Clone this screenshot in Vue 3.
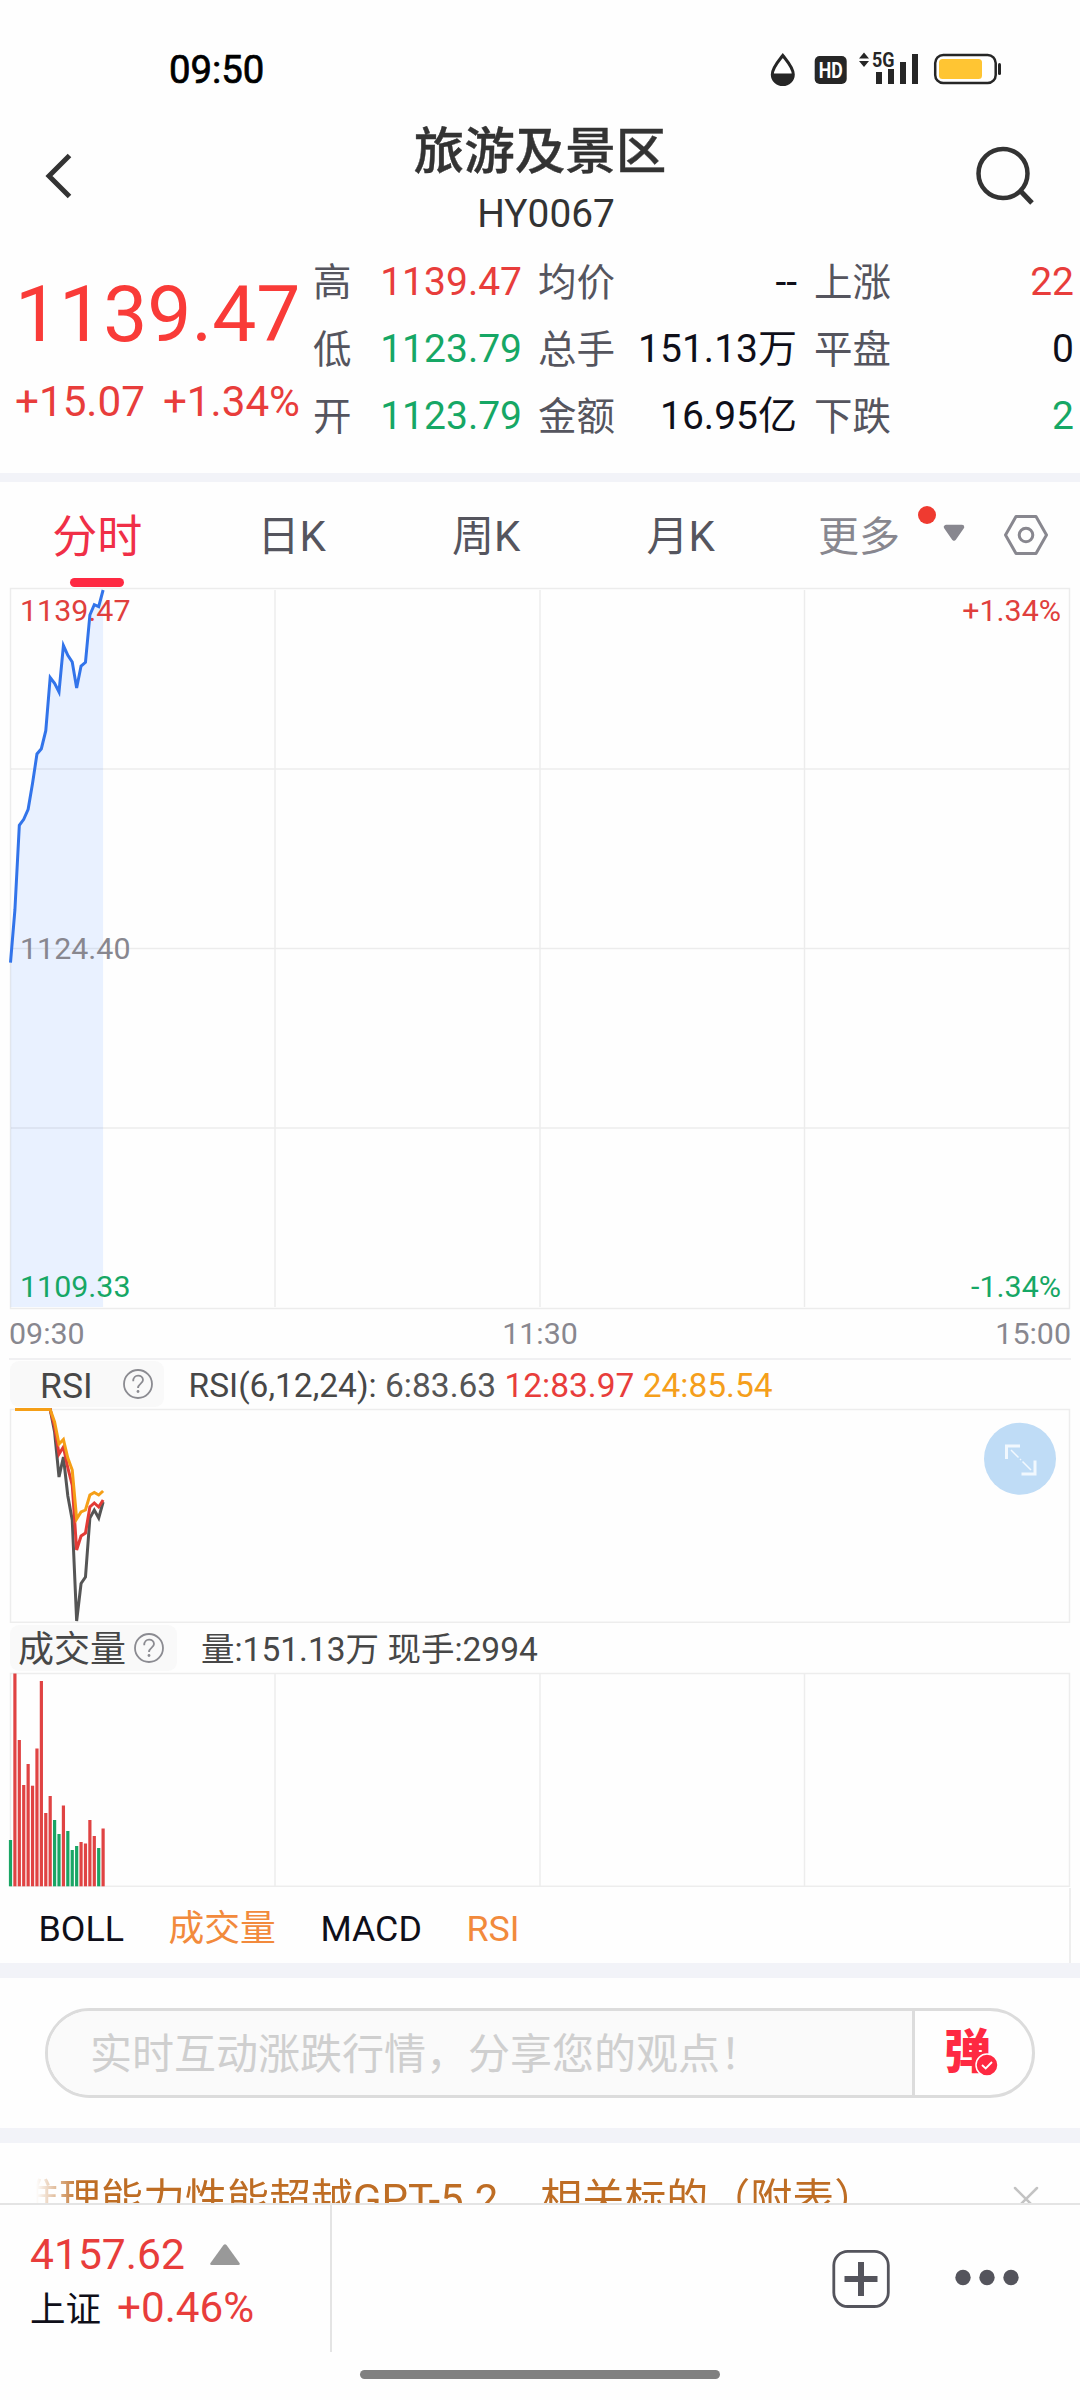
<script setup>
const STEP = 4.41
const LEFT = 10.5
const px = (i) => LEFT + i * STEP

const stats = [
  [['高', '1139.47', 'up'], ['低', '1123.79', 'down'], ['开', '1123.79', 'down']],
  [['均价', '--', ''], ['总手', '151.13万', ''], ['金额', '16.95亿', '']],
  [['上涨', '22', 'up'], ['平盘', '0', ''], ['下跌', '2', 'down']],
]
const tabs = ['分时', '日K', '周K', '月K']

const price = [962.7, 910, 825.3, 819.3, 809.3, 783.3, 754, 748.7, 730.7, 677.5, 683.3, 692, 645.5, 655.3, 662, 688, 666, 662.3, 615, 604.7, 606.7, 590]
const priceLine = price.map((y, i) => `${px(i)},${y}`).join(' ')
const priceArea = `${priceLine} ${px(21)},1307 ${LEFT},1307`

const series = (ys) => `15,1409.5 ${ys.map((y, i) => `${px(i + 9)},${y}`).join(' ')}`
const rsi = [
  { color: '#555555', pts: series([1409.5, 1432, 1477, 1457, 1496, 1520, 1621, 1583.5, 1577, 1518, 1510, 1518, 1502]) },
  { color: '#e23b36', pts: series([1409.5, 1427, 1454, 1447, 1468, 1485, 1550, 1536, 1533, 1507, 1503, 1507, 1500]) },
  { color: '#f59f17', pts: series([1409.5, 1422, 1444, 1439.5, 1458, 1470, 1519, 1512, 1510, 1495, 1492.5, 1495, 1491]) },
]

const tops = [1840, 1673.5, 1740, 1785, 1764, 1785.7, 1748.5, 1681, 1813, 1796, 1820, 1834, 1805.5, 1831, 1850, 1846, 1842, 1843.5, 1820, 1836, 1848, 1828.5]
const falling = [0, 10, 11, 13, 14, 15, 20]
const bars = tops.map((y, i) => ({ x: px(i) - 1.6, y, h: 1886.3 - y, color: falling.includes(i) ? '#1aa565' : '#e04343' }))
</script>

<template>
  <div class="screen">
    <div class="status">
      <span class="clock">09:50</span>
      <svg class="status-icons" width="240" height="40" viewBox="768 48 240 40">
        <path d="M782.8 55.5C787 61 793.3 67.500 793.3 74.500A10.500 10 0 0 1 772.300 74.500C772.300 67.500 778.600 61 782.800 55.500Z" fill="#fff" stroke="#262626" stroke-width="3" />
        <path d="M771.5 73.500H794A11.300 11.500 0 0 1 771.500 73.500Z" fill="#262626" />
        <rect x="814.700" y="56" width="32" height="28" rx="5" fill="#262626" />
        <text x="830.700" y="77.700" class="hd" text-anchor="middle" textLength="24" lengthAdjust="spacingAndGlyphs">HD</text>
        <path d="M859 58.500L864 52.500L869 58.500ZM859 61L864 67L869 61Z" fill="#262626" />
        <text x="872" y="67" class="g5" textLength="22.500" lengthAdjust="spacingAndGlyphs">5G</text>
        <path d="M876 72h6v12h-6zM888 69h6v15h-6zM900 62h6v22h-6zM912 54h6v30h-6z" fill="#262626" />
        <rect x="935.200" y="55" width="60.500" height="28" rx="8" fill="#fff" stroke="#262626" stroke-width="2.500" />
        <rect x="939" y="59" width="43" height="20" rx="3.500" fill="#ffc533" />
        <rect x="998" y="63" width="3" height="12" rx="1.500" fill="#262626" />
      </svg>
    </div>

    <header class="head">
      <svg width="40" height="60" viewBox="40 146 40 60"><path d="M69.500 155.500L49 176L69.500 196.500" fill="none" stroke="#333" stroke-width="5" /></svg>
      <div class="titles">
        <div class="title">旅游及景区</div>
        <div class="code">HY0067</div>
      </div>
      <svg width="64" height="64" viewBox="974 144 64 64"><circle cx="1003" cy="173.500" r="24.500" fill="none" stroke="#333" stroke-width="4.500" /><path d="M1020.500 191L1032 203" stroke="#333" stroke-width="5" /></svg>
    </header>

    <section class="quote">
      <div class="last">
        <div class="big">1139.47</div>
        <div class="change"><span>+15.07</span><span>+1.34%</span></div>
      </div>
      <div v-for="(col, c) in stats" :key="c" class="col" :class="'c' + c">
        <div v-for="s in col" :key="s[0]" class="stat">
          <span class="label">{{ s[0] }}</span><span :class="s[2]">{{ s[1] }}</span>
        </div>
      </div>
    </section>
    <div class="band thin"></div>

    <nav class="tabs">
      <div v-for="(t, i) in tabs" :key="t" class="tab" :class="{ active: i === 0 }">{{ t }}</div>
      <div class="more">更多</div>
      <svg width="150" height="70" viewBox="910 500 150 70">
        <circle cx="927" cy="515" r="9" fill="#ef3a30" />
        <path d="M946 527H962L954 538.500Z" fill="#88878f" stroke="#88878f" stroke-width="4.500" stroke-linejoin="round" />
        <path d="M1016 516.500H1036L1046.500 535L1036 553.500H1016L1005.500 535Z" fill="none" stroke="#88878f" stroke-width="3" stroke-linejoin="round" />
        <circle cx="1026" cy="535" r="6.800" fill="none" stroke="#88878f" stroke-width="3" />
      </svg>
    </nav>

    <svg class="chart" width="1080" height="773" viewBox="0 587 1080 773">
      <polygon :points="priceArea" fill="#e9f1ff" />
      <g fill="none" stroke="#000" stroke-opacity=".07" stroke-width="1.500">
        <path d="M10.500 588.500H1069.500V1308.500H10.500Z" />
        <path d="M275 590V1307M540 590V1307M804.500 590V1307M11 769H1069M11 948.500H1069M11 1128H1069" />
      </g>
      <path d="M9 1359H1071" stroke="#f0f0f2" stroke-width="2" />
      <g class="axis">
        <text x="20" y="621" class="up">1139.47</text>
        <text x="20" y="959" class="mute">1124.40</text>
        <text x="20" y="1297" class="down">1109.33</text>
        <text x="1061" y="621" class="up" text-anchor="end">+1.34%</text>
        <text x="1061" y="1297" class="down" text-anchor="end">-1.34%</text>
        <text x="9" y="1344" class="mute">09:30</text>
        <text x="540" y="1344" class="mute" text-anchor="middle">11:30</text>
        <text x="1071" y="1344" class="mute" text-anchor="end">15:00</text>
      </g>
      <polyline :points="priceLine" fill="none" stroke="#3274ea" stroke-width="3" />
    </svg>

    <div class="ind rsi-head">
      <div class="chip"><span class="name">RSI</span>
        <svg width="32" height="32" viewBox="0 0 32 32"><circle cx="16" cy="16" r="14" fill="none" stroke="#8b8b91" stroke-width="1.800" /><path d="M11.200 13.200C11 5.800 21 6 21 12C21 15.500 16 15.800 16 20" fill="none" stroke="#8b8b91" stroke-width="1.800" /><circle cx="16" cy="23.500" r="1.400" fill="#8b8b91" /></svg>
      </div>
      <div class="values">RSI(6,12,24): <span class="g">6:83.63</span> <span class="up">12:83.97</span> <span class="o">24:85.54</span></div>
    </div>

    <svg class="chart" width="1080" height="216" viewBox="0 1408 1080 216">
      <path d="M10.500 1409.500H1069.500V1622.300H10.500Z" fill="none" stroke="#ededed" stroke-width="1.500" />
      <polyline v-for="l in rsi" :key="l.color" :points="l.pts" fill="none" :stroke="l.color" stroke-width="3" />
      <circle cx="1020" cy="1458.700" r="36" fill="#bfdcf6" />
      <g fill="none" stroke="#f1f8fe">
        <path d="M1006.500 1459V1446H1020M1021.500 1474H1035V1460.500" stroke-width="3" />
        <path d="M1011 1450L1018.500 1457.500M1022.500 1461.500L1031 1470" stroke-width="1.500" /><path d="M1020 1459l1 1" stroke-width="1.500" />
      </g>
    </svg>

    <div class="ind vol-head">
      <div class="chip"><span class="name">成交量</span>
        <svg width="32" height="32" viewBox="0 0 32 32"><circle cx="16" cy="16" r="14" fill="none" stroke="#8b8b91" stroke-width="1.800" /><path d="M11.200 13.200C11 5.800 21 6 21 12C21 15.500 16 15.800 16 20" fill="none" stroke="#8b8b91" stroke-width="1.800" /><circle cx="16" cy="23.500" r="1.400" fill="#8b8b91" /></svg>
      </div>
      <div class="values">量:151.13万 现手:2994</div>
    </div>

    <svg class="chart" width="1080" height="216" viewBox="0 1672 1080 216">
      <path d="M10.500 1673.500H1069.500V1886.300H10.500ZM275 1673V1886M540 1673V1886M804.500 1673V1886" fill="none" stroke="#ededed" stroke-width="1.500" />
      <rect v-for="b in bars" :key="b.x" :x="b.x" :y="b.y" width="3.200" :height="b.h" :fill="b.color" />
    </svg>

    <div class="picks"><span>BOLL</span><span class="on">成交量</span><span>MACD</span><span class="on">RSI</span></div>
    <div class="band"></div>

    <div class="comment">
      <div class="pill">
        <div class="input">实时互动涨跌行情，分享您的观点！</div>
        <div class="danmu"><span>弹</span>
          <svg class="badge" width="24" height="24" viewBox="0 0 24 24"><circle cx="12" cy="12" r="11" fill="#fe2942" stroke="#fff" stroke-width="1.500" /><path d="M7 12L10.700 15.500L17 9" fill="none" stroke="#fff" stroke-width="1.800" /></svg>
        </div>
      </div>
    </div>
    <div class="band"></div>

    <div class="news">
      <div class="ticker">推理能力性能超越GPT-5.2，相关标的（附表）</div>
      <svg width="28" height="28" viewBox="0 0 28 28"><path d="M3 3L25 25M25 3L3 25" stroke="#c3c3c3" stroke-width="2.500" stroke-linecap="round" /></svg>
    </div>

    <footer class="foot">
      <div class="index">
        <div class="line1"><span class="up">4157.62</span>
          <svg width="30" height="21" viewBox="0 0 30 21"><path d="M13.500 1Q15 -0.500 16.500 1L29.500 19Q30.500 21 28.500 21H1.500Q-0.500 21 0.500 19Z" fill="#999" /></svg>
        </div>
        <div class="line2"><span>上证</span><span class="up pct">+0.46%</span></div>
      </div>
      <svg class="actions" width="200" height="62" viewBox="830 2247 200 62">
        <rect x="833.800" y="2251.300" width="54.500" height="55.200" rx="14" fill="none" stroke="#54545c" stroke-width="2.800" />
        <path d="M844.500 2279H877.500M861 2262V2296" stroke="#54545c" stroke-width="6" />
        <g fill="#54545c"><circle cx="963" cy="2277.500" r="7.700" /><circle cx="987" cy="2277.500" r="7.700" /><circle cx="1011" cy="2277.500" r="7.700" /></g>
      </svg>
    </footer>
    <div class="home"></div>
  </div>
</template>

<style>
body { background: #fff; }
</style>

<style scoped>
.screen { width: 1080px; height: 2400px; overflow: hidden; background: #fefefe; font-family: Roboto, "Noto Sans CJK SC", sans-serif; color: #0f0f19; display: flex; flex-direction: column; }
.screen > * { flex: none; box-sizing: border-box; }
svg { display: block; flex: none; }
.up { color: #e83d3b; fill: #e03f3c; }
.down { color: #16a765; fill: #16a765; }
.mute { fill: #88878f; }

.status { height: 110px; padding: 48px 72px 0 169px; display: flex; justify-content: space-between; align-items: flex-start; }
.clock { font-size: 38.3px; line-height: 44px; font-weight: 400; color: #000; -webkit-text-stroke: .7px #000; }
.hd { font: 700 22px Roboto, sans-serif; fill: #fff; }
.g5 { font: 700 19.500px Roboto, sans-serif; fill: #262626; }

.head { height: 138px; padding: 0 42px 0 40px; display: flex; justify-content: space-between; align-items: flex-start; }
.head > svg:first-child { margin: 36px 24px 0 0; }
.head > svg:last-child { margin-top: 34px; }
.titles { text-align: center; color: #333; }
.title { font-size: 50.500px; line-height: 60px; font-weight: 500; margin-top: 12px; padding-left: 2px; -webkit-text-stroke: .4px #333; }
.code { font-size: 38.800px; line-height: 48px; margin-top: 8px; padding-left: 14px; }

.quote { height: 225px; display: flex; }
.last { box-sizing: border-box; width: 313px; padding-left: 15px; white-space: nowrap; }
.big { font-size: 78.500px; line-height: 90px; margin-top: 21px; color: #f93b38; }
.change { font-size: 42.200px; line-height: 50px; margin-top: 18px; color: #e83d3b; display: flex; gap: 18px; }
.col { flex: none; padding-top: 1px; }
.stat { height: 67px; line-height: 67px; font-size: 39px; display: flex; justify-content: space-between; white-space: nowrap; }
.label { color: #55555e; font-size: 38.500px; }
.c0 { width: 209px; }
.c1 { width: 259px; margin-left: 16px; }
.c2 { width: 260px; margin-left: 17px; }

.band { height: 15px; background: #f2f3f8; }
.band.thin { height: 9px; }

.tabs { height: 105px; display: flex; align-items: flex-start; }
.tab { width: 194.500px; text-align: center; font-size: 42px; line-height: 110px; height: 106px; color: #55555e; position: relative; }
.tab.active { color: #f02f47; font-size: 45px; line-height: 112px; }
.tab.active::after { content: ""; position: absolute; left: 70px; top: 96px; width: 54px; height: 9px; border-radius: 5px; background: #fe2942; }
.more { width: 92px; margin-left: 40px; font-size: 41px; line-height: 110px; color: #88878f; }
.tabs > svg { margin-top: 18px; }

.chart { position: relative; }
.axis { font-size: 30.400px; }

.ind { height: 48px; padding-left: 10px; display: flex; }
.chip { box-sizing: border-box; height: 46px; margin-top: 1px; background: #f9f9f9; border-radius: 9px; display: flex; align-items: center; color: #474747; }
.name { font-size: 35.500px; line-height: 46px; padding-top: 4px; }
.rsi-head .chip { width: 154px; padding-left: 30px; gap: 29px; }
.vol-head .chip { width: 167px; padding-left: 8px; gap: 7px; }
.vol-head .name { font-size: 36px; }
.values { font-size: 33.500px; line-height: 52px; color: #474747; white-space: pre; }
.rsi-head .values { margin-left: 24.500px; }
.vol-head .values { margin-left: 24px; }
.g { color: #555; }
.o { color: #f59f1b; }

.picks { height: 75px; width: 1071px; border-right: 2px solid #eee; padding-left: 38.500px; display: flex; font-size: 35.800px; line-height: 82px; }
.picks span { margin-right: 44.500px; }
.on { color: #f28a3c; }

.comment { height: 150px; padding: 30px 45px; }
.pill { box-sizing: border-box; width: 990px; height: 90px; border: 3px solid #dcdcdc; border-radius: 45px; display: flex; overflow: hidden; }
.input { box-sizing: border-box; width: 867px; border-right: 3px solid #dcdcdc; background: #fafafa; padding-left: 42px; font-size: 42px; line-height: 88px; color: #cfcfcf; white-space: nowrap; }
.danmu { position: relative; flex: 1; padding-left: 29px; font-size: 47px; line-height: 82px; font-weight: 900; color: #fe2942; }
.badge { position: absolute; left: 60px; top: 42px; }

.news { height: 60px; overflow: hidden; padding: 0 40px 0 36px; display: flex; justify-content: space-between; }
.ticker { width: 920px; overflow: hidden; text-indent: -19px; font-size: 42px; line-height: 114px; height: 114px; color: #be6d24; white-space: nowrap; -webkit-mask-image: linear-gradient(90deg, transparent, #000 44px); mask-image: linear-gradient(90deg, transparent, #000 44px); }
.news svg { margin-top: 42px; }

.foot { height: 149px; border-top: 2px solid #e4e4e4; display: flex; justify-content: space-between; }
.index { box-sizing: border-box; width: 332px; border-right: 2px solid #e4e4e4; padding-left: 30px; }
.line1 { display: flex; align-items: center; gap: 25px; font-size: 42.600px; line-height: 54px; margin-top: 22px; }
.line2 { display: flex; gap: 16px; font-size: 35.500px; line-height: 56px; margin-top: 1px; }
.pct { font-size: 42.200px; line-height: 52px; }
.actions { margin: 42px 50px 0 0; }
.home { width: 360px; height: 9px; border-radius: 5px; background: #808080; margin: 18px auto 0; }
</style>
